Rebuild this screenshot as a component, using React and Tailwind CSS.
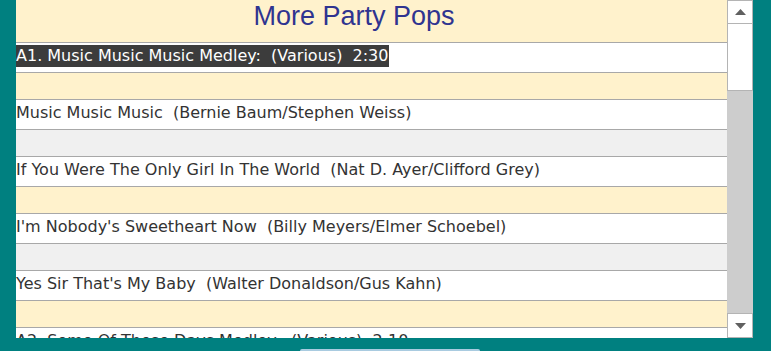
const rows = [
  { type: "text", text: "A1. Music Music Music Medley:  (Various)  2:30", selected: true },
  { type: "gap", bg: "bg-[#fff2cc]" },
  { type: "text", text: "Music Music Music  (Bernie Baum/Stephen Weiss)" },
  { type: "gap", bg: "bg-[#f0f0f0]" },
  { type: "text", text: "If You Were The Only Girl In The World  (Nat D. Ayer/Clifford Grey)" },
  { type: "gap", bg: "bg-[#fff2cc]" },
  { type: "text", text: "I'm Nobody's Sweetheart Now  (Billy Meyers/Elmer Schoebel)" },
  { type: "gap", bg: "bg-[#f0f0f0]" },
  { type: "text", text: "Yes Sir That's My Baby  (Walter Donaldson/Gus Kahn)" },
  { type: "gap", bg: "bg-[#fff2cc]" },
  { type: "text", text: "A2. Some Of These Days Medley:  (Various)  2:10" },
]

function Row({ row }) {
  if (row.type === "gap") {
    return <div className={`h-[27px] shrink-0 border-b border-[#a8a8a8] ${row.bg}`} />
  }
  return (
    <div className="h-[30px] shrink-0 border-b border-[#a8a8a8] bg-white">
      <span
        className={`inline-block whitespace-pre text-[16px] leading-[22px] font-['DejaVu_Sans',sans-serif] ${
          row.selected ? "bg-[#3c3c3c] text-white pr-[1px]" : "text-[#333]"
        }`}
      >
        {row.text}
      </span>
    </div>
  )
}

function Arrow({ down }) {
  return (
    <svg width="11" height="6" viewBox="0 0 11 6">
      <path d={down ? "M0 0 L11 0 L5.5 6 Z" : "M0 6 L11 6 L5.5 0 Z"} fill="#606060" />
    </svg>
  )
}

export default function App() {
  return (
    <div className="w-[771px] h-[351px] bg-[#008080] overflow-hidden pl-[16px]">
      <div className="flex h-[338px]">
        <div className="w-[711px] flex flex-col overflow-hidden">
          <div className="h-[43px] shrink-0 bg-[#fff2cc] border-b border-[#a8a8a8] pr-[35px] text-center text-[27px] leading-[30px] pt-[1px] text-[#2f3490] font-['Liberation_Sans',Arial,sans-serif]">
            More Party Pops
          </div>
          {rows.map((r, i) => (
            <Row key={i} row={r} />
          ))}
        </div>
        <div className="w-[26px] flex flex-col bg-[#cdcdcd]">
          <div className="h-[24px] bg-white border border-[#b4b4b4] flex items-center justify-center">
            <Arrow />
          </div>
          <div className="h-[67px] bg-white border-x border-b border-[#b4b4b4]" />
          <div className="flex-1" />
          <div className="h-[25px] bg-white border border-[#b4b4b4] flex items-center justify-center">
            <Arrow down />
          </div>
        </div>
      </div>
      <div className="ml-[284px] mt-[11px] w-[180px] h-[10px] bg-[#a9cbe0] rounded-t-[2px]" />
    </div>
  )
}
